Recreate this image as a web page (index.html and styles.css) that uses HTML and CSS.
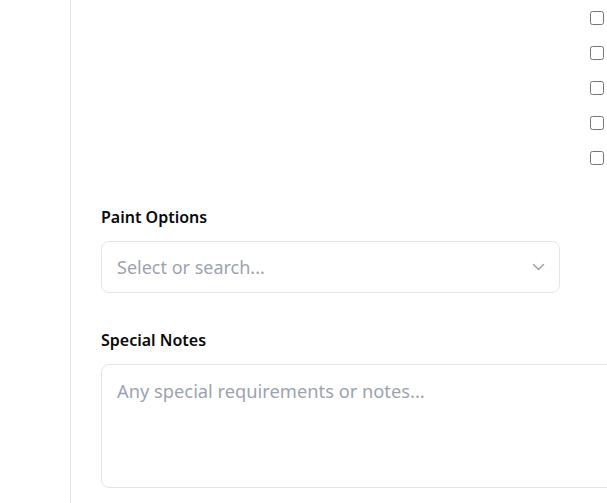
FILE: index.html
```html
<!DOCTYPE html>
<html lang="en">
<head>
<meta charset="utf-8">
<title>Form</title>
<link rel="stylesheet" href="styles.css">
</head>
<body>
<div class="page">
  <aside class="sidebar"></aside>
  <main class="main">
    <div class="top-grid">
      <div></div>
      <div class="checks">
        <div class="check-row"><input type="checkbox" aria-label="Primer"></div>
        <div class="check-row"><input type="checkbox" aria-label="Sanding"></div>
        <div class="check-row"><input type="checkbox" aria-label="Trim"></div>
        <div class="check-row"><input type="checkbox" aria-label="Doors"></div>
        <div class="check-row"><input type="checkbox" aria-label="Ceiling"></div>
      </div>
    </div>
    <div class="field field-select">
      <div class="label">Paint Options</div>
      <div class="select">
        <span class="placeholder">Select or search...</span>
        <svg class="chevron" width="16" height="16" viewBox="0 0 16 16" fill="none"><path d="M2.5 5.5l5 5 5-5" stroke="#9ca3af" stroke-width="1.5" stroke-linecap="round" stroke-linejoin="round"/></svg>
      </div>
    </div>
    <div class="field field-notes">
      <div class="label">Special Notes</div>
      <textarea class="notes" placeholder="Any special requirements or notes..."></textarea>
    </div>
  </main>
</div>
</body>
</html>
```
FILE: styles.css
```css
html, body {
  margin: 0;
  padding: 0;
  background: #ffffff;
  overflow: hidden;
}
body {
  font-family: "Noto Sans", "Open Sans", sans-serif;
  color: #111111;
}
.page {
  display: flex;
  width: 1200px;
  min-height: 503px;
}
.sidebar {
  width: 70px;
  flex: none;
  border-right: 1px solid #e5e5e5;
}
.main {
  flex: none;
  width: 942px;
  padding-left: 30px;
}
.top-grid {
  display: grid;
  grid-template-columns: 459px 1fr;
  column-gap: 30px;
}
.checks {
  display: flex;
  flex-direction: column;
}
.check-row {
  height: 35px;
  display: flex;
  align-items: center;
}
.check-row input {
  margin: 0;
  width: 14px;
  height: 14px;
}
.field-select {
  margin-top: 30px;
}
.field-notes {
  margin-top: 35px;
}
.label {
  font-size: 16px;
  font-weight: 600;
  line-height: 24px;
  color: #0a0a0a;
  margin-bottom: 12px;
}
.select {
  width: 459px;
  height: 52px;
  box-sizing: border-box;
  border: 1px solid #e5e5e5;
  border-radius: 8px;
  display: flex;
  align-items: center;
  justify-content: space-between;
  padding: 0 12px 0 15px;
}
.placeholder {
  font-size: 18px;
  color: #9ca3af;
}
.chevron {
  display: block;
}
.notes {
  display: block;
  width: 100%;
  height: 124px;
  box-sizing: border-box;
  border: 1px solid #e5e5e5;
  border-radius: 8px;
  padding: 12px 15px;
  font-family: "Noto Sans", "Open Sans", sans-serif;
  font-size: 18.3px;
  line-height: 27px;
  resize: none;
  outline: none;
  color: #111;
}
.notes::placeholder {
  color: #9ca3af;
}
```
